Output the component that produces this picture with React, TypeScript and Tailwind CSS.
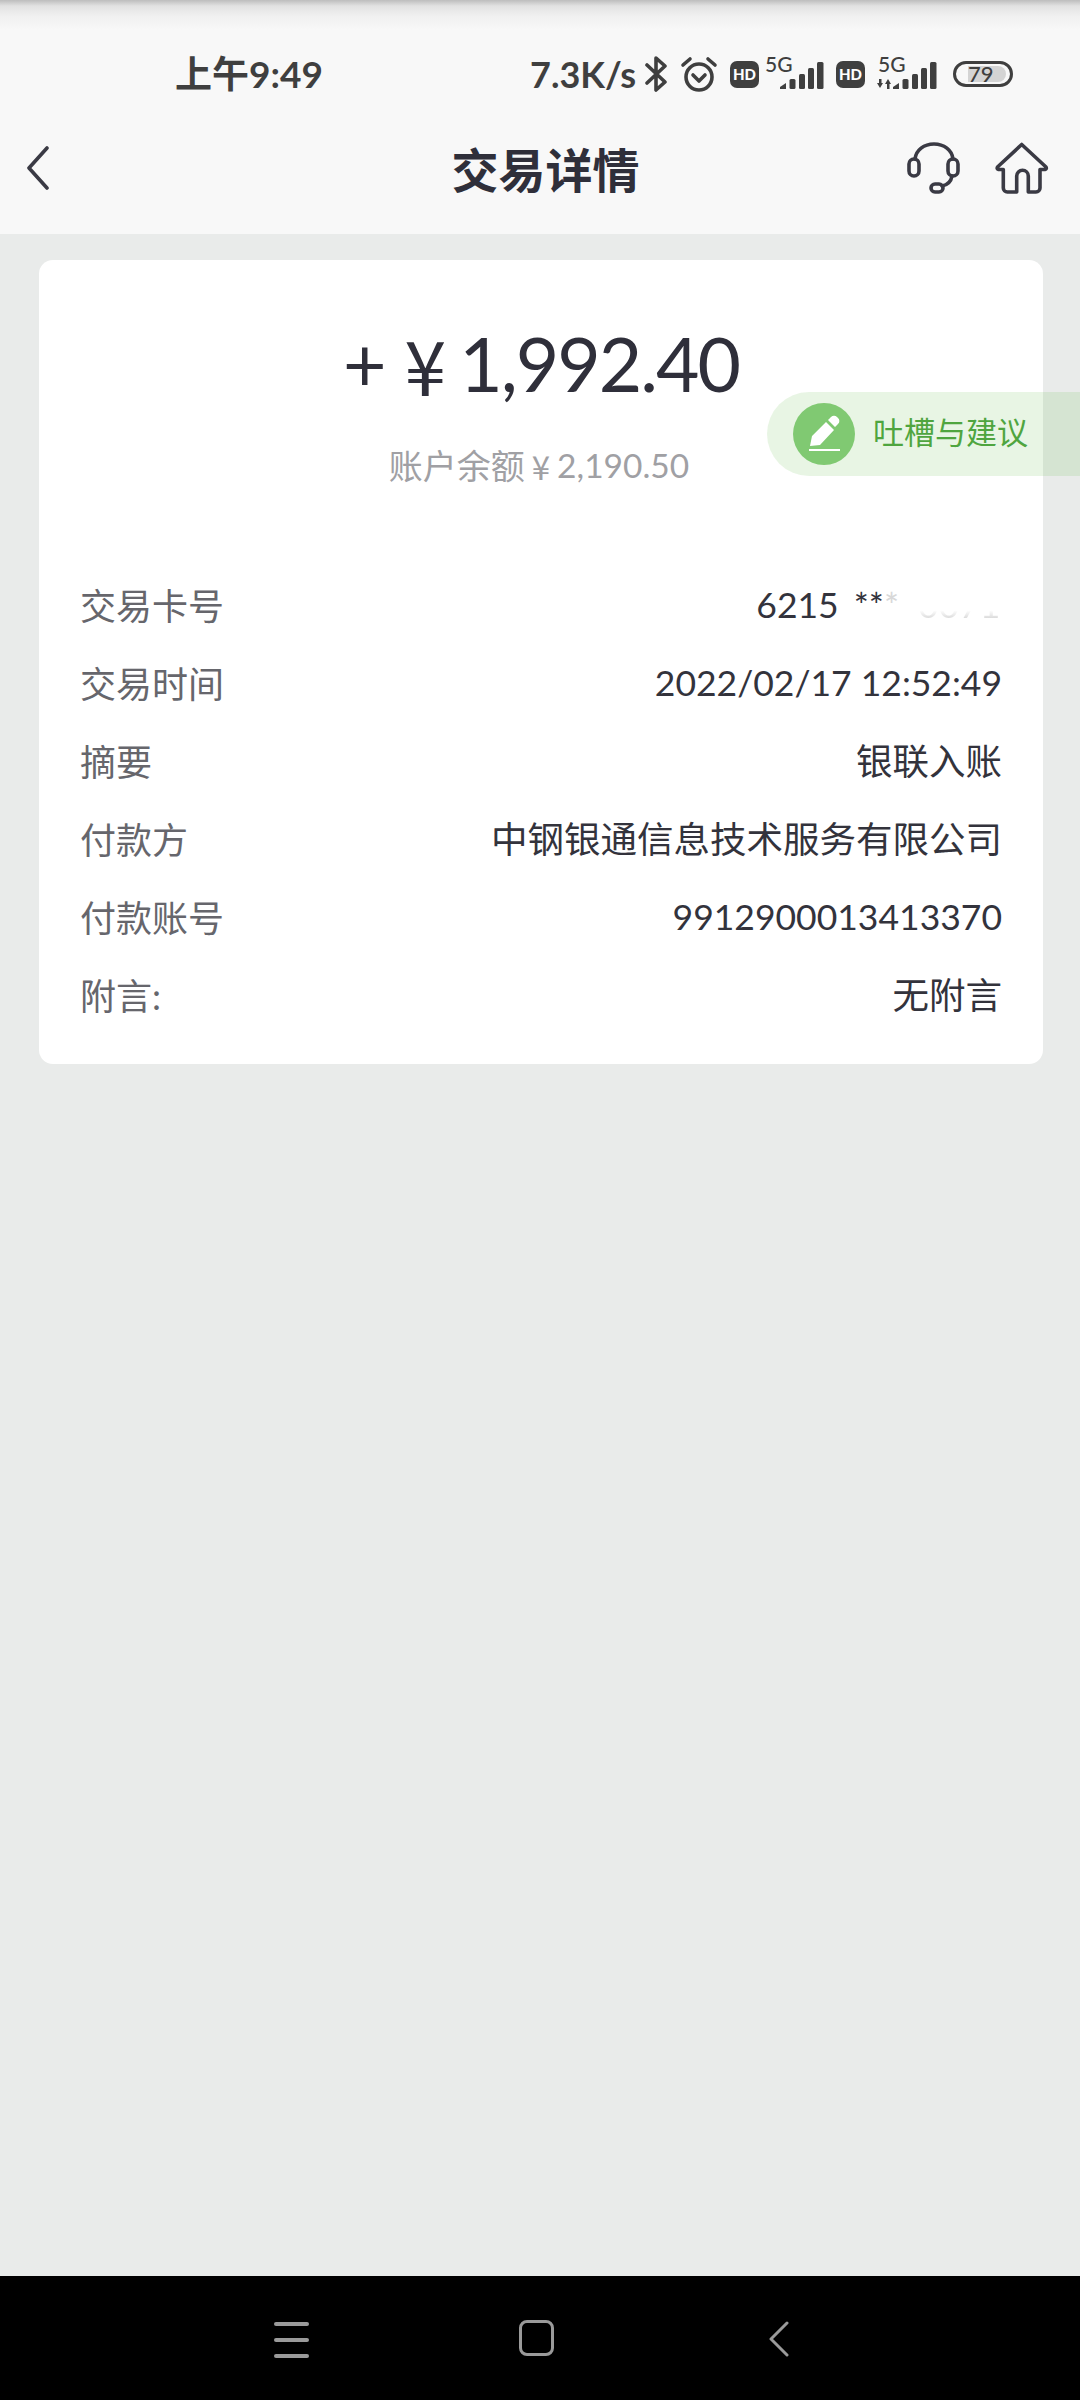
const font = "font-['Lato','Noto_Sans_CJK_SC',sans-serif]";
const digits = 'text-[35.5px]';
const han = 'text-[36.5px]';

const rows: [string, string, string][] = [
  ['交易时间', '2022/02/17 12:52:49', digits],
  ['摘要', '银联入账', han],
  ['付款方', '中钢银通信息技术服务有限公司', han],
  ['付款账号', '9912900013413370', digits],
  ['附言:', '无附言', han],
];

function Bars() {
  return (
    <svg width="44" height="27" viewBox="0 0 44 27" fill="#3f3f3f">
      <path d="M0 27v-2l6-4v6z" />
      <rect x="9.5" y="17" width="6" height="10" rx="1.5" />
      <rect x="19" y="12" width="6" height="15" rx="1.5" />
      <rect x="28" y="6" width="6" height="21" rx="1.5" />
      <rect x="37" y="0" width="6.5" height="27" rx="1.5" />
    </svg>
  );
}

function Hd() {
  return (
    <span className="flex h-[27px] w-[29px] items-center justify-center rounded-[7px] bg-[#3f3f3f] text-[15px] font-black leading-none text-white">
      HD
    </span>
  );
}

function StatusBar() {
  return (
    <div className="flex h-[120px] items-center bg-[linear-gradient(#bdbdbd_0px,#e2e2e2_6px,#f0f0f0_16px,#f8f8f8_30px)] pl-[175px] pt-[28px] text-[#3f3f3f]">
      <span className="w-[355px] text-[37px] font-bold leading-[36px]">上午9:49</span>
      <span className="w-[115px] text-[36px] font-bold leading-[36px]">7.3K/s</span>
      <svg width="22" height="36" viewBox="0 0 22 36" fill="none" stroke="#3f3f3f" strokeWidth="3.6" strokeLinecap="round" strokeLinejoin="round">
        <path d="M2 9l18 17-9 8V2l9 8L2 27" />
      </svg>
      <svg width="38" height="36" viewBox="0 0 38 36" fill="none" stroke="#3f3f3f" strokeWidth="3.6" strokeLinecap="round" strokeLinejoin="round" className="ml-[13px]">
        <circle cx="19" cy="21" r="13" />
        <path d="M13 19l6 6 6-6M3 9l7-6M35 9l-7-6" />
      </svg>
      <div className="ml-[12px]"><Hd /></div>
      <div className="relative ml-[21px] flex h-[30px] w-[44px] items-end">
        <span className="absolute left-[-15px] top-[-6px] text-[21px] font-medium leading-[22px]">5G</span>
        <Bars />
      </div>
      <div className="ml-[12px]"><Hd /></div>
      <div className="relative ml-[12px] flex h-[30px] w-[60px] items-end">
        <span className="absolute left-[1px] top-[-6px] text-[21px] font-medium leading-[22px]">5G</span>
        <svg width="14" height="10" viewBox="0 0 14 10" fill="#3f3f3f" className="mr-[2px]">
          <path d="M0 4h2V0h2.5v4H6L3 9zM8 5h2v5h2.5V5H14l-3-5z" />
        </svg>
        <Bars />
      </div>
      <div className="relative ml-[16px] h-[26px] w-[60px] overflow-hidden rounded-full border-[3px] border-[#3f3f3f]">
        <span className="absolute inset-y-[2px] left-[12px] w-[38px] rounded-r-full bg-[#d4d4d4]" />
        <span className="absolute left-[12px] top-0 text-[22px] font-medium leading-[20px]">79</span>
      </div>
    </div>
  );
}

function Header() {
  return (
    <div className="relative flex h-[114px] items-center justify-center bg-[#f8f8f8]">
      <svg width="24" height="44" viewBox="0 0 24 44" fill="none" stroke="#3a3a44" strokeWidth="3.6" strokeLinecap="round" strokeLinejoin="round" className="absolute left-[26px] top-[26px]">
        <path d="M21 2L3 22l18 20" />
      </svg>
      <h1 className="mb-[14px] pl-[11px] text-[47px] font-bold leading-none text-[#2f2f3a]">交易详情</h1>
      <svg width="56" height="54" viewBox="0 0 56 54" fill="none" stroke="#3a3a44" strokeWidth="3.6" strokeLinecap="round" strokeLinejoin="round" className="absolute left-[905px] top-[22px]">
        <path d="M10 17C11 8 19 2 29 2s18 6 19 15" />
        <rect x="4" y="17" width="10" height="17" rx="5" />
        <rect x="43" y="17" width="10" height="17" rx="5" />
        <path d="M47 34c-1 6-5 9-10 10" />
        <rect x="26" y="42" width="12" height="8" rx="4" />
      </svg>
      <svg width="56" height="54" viewBox="0 0 56 54" fill="none" stroke="#3a3a44" strokeWidth="3.6" strokeLinecap="round" strokeLinejoin="round" className="absolute left-[994px] top-[22px]">
        <path d="M27.7 2.5L3.5 25q-1 2 1 2.5h4.8V46a4 4 0 004 4h9.4V34a5.8 5.8 0 0111.6 0v16H42a4 4 0 004-4V27.5h5q2-.5 1-2.5z" />
      </svg>
    </div>
  );
}

function Row({ label, size, children }: { label: string; size: string; children: React.ReactNode }) {
  return (
    <div className="flex h-[78px] items-center justify-between leading-none">
      <span className="text-[36px] text-[#66666c]">{label}</span>
      <span className={`mb-[2px] flex items-center text-[#33333c] ${size}`}>{children}</span>
    </div>
  );
}

function Feedback() {
  return (
    <div className="absolute left-[767px] top-[392px] flex h-[84px] w-[313px] items-center rounded-l-[42px] bg-[#63bd4b]/15 pl-[26px]">
      <svg width="62" height="62" viewBox="0 0 62 62">
        <circle cx="31" cy="31" r="31" fill="#80c972" />
        <path d="M17 43l2-10 14-14 8 8-14 15zM35 17l3-3a4 4 0 016 0l1 1a4 4 0 010 6l-3 3z" fill="#fff" />
        <rect x="16" y="46" width="31" height="2" fill="#fff" />
      </svg>
      <span className="mb-[3px] ml-[18px] text-[31px] leading-none text-[#4fa53f]">吐槽与建议</span>
    </div>
  );
}

export default function App() {
  return (
    <div className={`relative flex h-[2400px] w-[1080px] flex-col bg-[#e9ebea] ${font}`}>
      <StatusBar />
      <Header />
      <main className="flex-1 pl-[39px] pr-[37px] pt-[26px]">
        <div className="rounded-[14px] bg-white px-[41px] pb-[29px] pt-[55px]">
          <div className="flex h-[97px] items-center justify-center text-[75px] leading-none tracking-[-2px] text-[#2f2f3a]">
            +<span className="ml-[20px] font-['Noto_Sans_CJK_SC']">¥</span><span className="ml-[15px]">1,992.40</span>
          </div>
          <div className="mt-[29px] flex h-[50px] items-center justify-center pr-[4px] leading-none text-[#a0a0a4]">
            <span className="text-[34px]">账户余额</span><span className="ml-[7px] text-[33px] font-['Noto_Sans_CJK_SC']">¥</span><span className="ml-[7px] text-[33.5px]">2,190.50</span>
          </div>
          <div className="mt-[76px]">
            <Row label="交易卡号" size={digits}>
              6215
              <span className="ml-[15px]">**</span>
              <span className="text-[#d8d8d8]">*</span>
              <span className="ml-[19px] w-[84px] bg-[linear-gradient(#fff_65%,#c4c4c4)] bg-clip-text text-transparent">0071</span>
            </Row>
            {rows.map(([label, value, size]) => (
              <Row key={label} label={label} size={size}>{value}</Row>
            ))}
          </div>
        </div>
      </main>
      <nav className="relative h-[124px] bg-black">
        <div className="absolute left-[274px] top-[46px] flex h-[36px] w-[35px] flex-col justify-between">
          <span className="h-[4px] rounded bg-[#9a9a9a]" />
          <span className="h-[4px] rounded bg-[#9a9a9a]" />
          <span className="h-[4px] rounded bg-[#9a9a9a]" />
        </div>
        <div className="absolute left-[519px] top-[44px] h-[36px] w-[35px] rounded-[8px] border-[3px] border-[#9a9a9a]" />
        <svg width="22" height="36" viewBox="0 0 22 36" fill="none" stroke="#9a9a9a" strokeWidth="3" strokeLinecap="round" strokeLinejoin="round" className="absolute left-[768px] top-[45px]">
          <path d="M19 2L3 18l16 16" />
        </svg>
      </nav>
      <Feedback />
    </div>
  );
}
